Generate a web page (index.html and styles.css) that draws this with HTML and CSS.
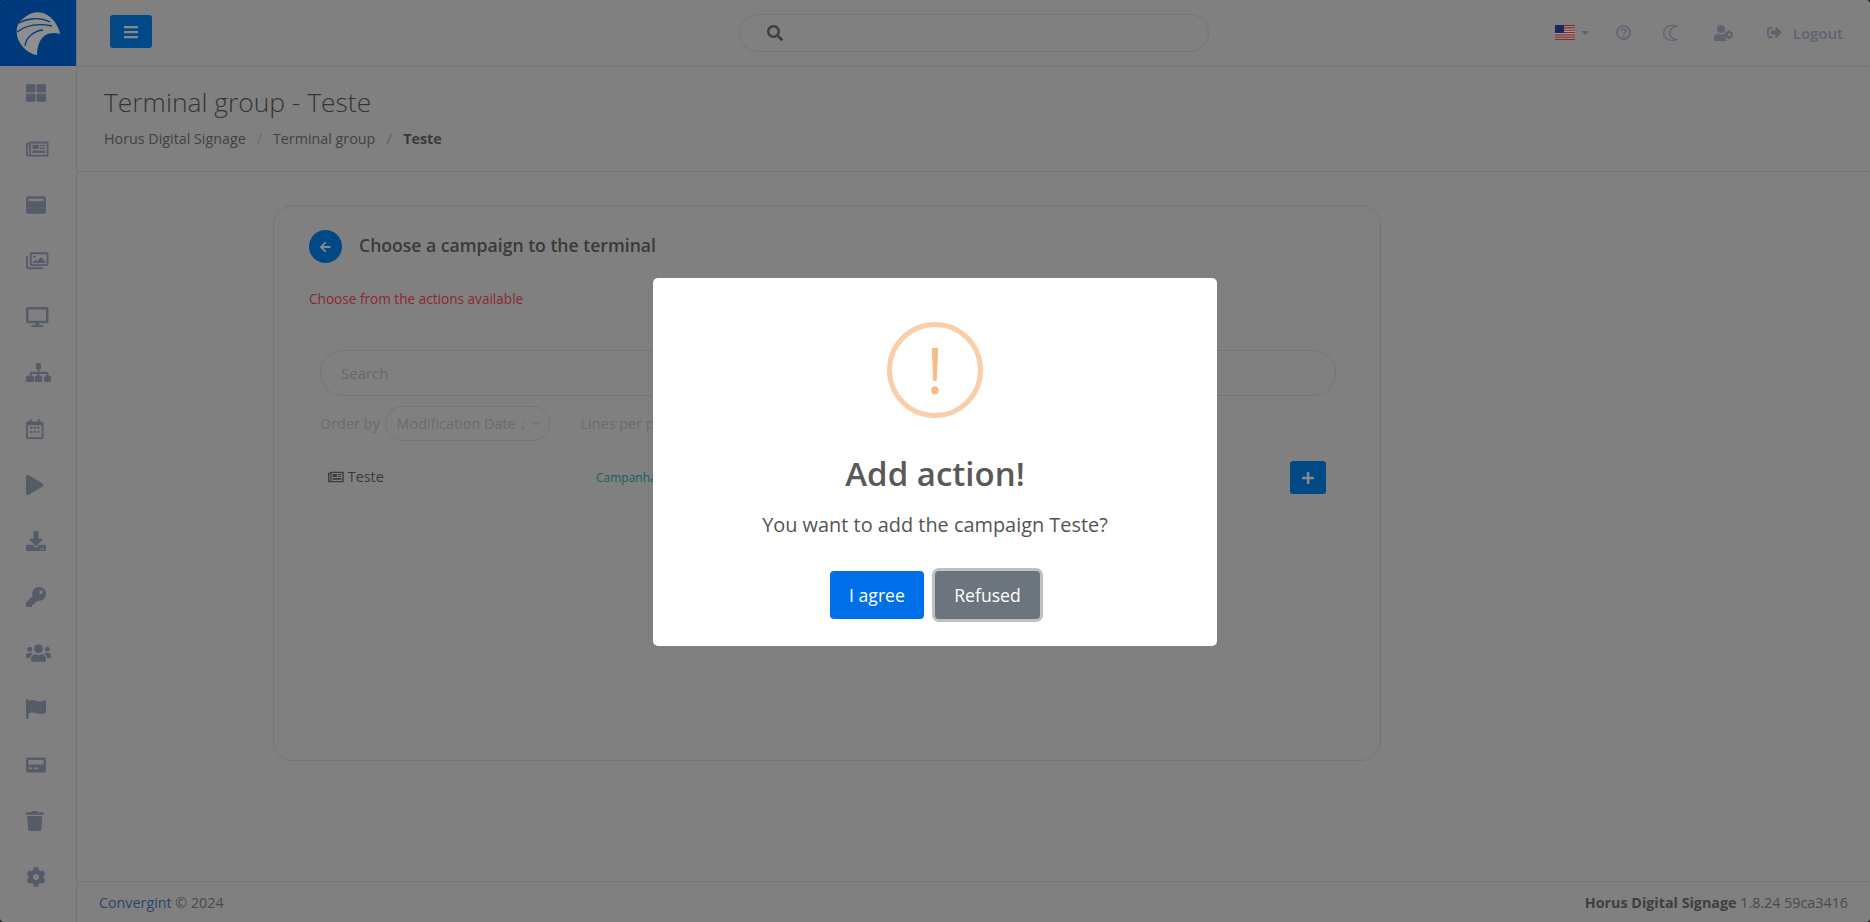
FILE: index.html
```html
<!DOCTYPE html>
<html lang="en">
<head>
<meta charset="utf-8">
<title>Terminal group - Teste</title>
<link rel="stylesheet" href="styles.css">
</head>
<body>
<div class="app">
  <aside class="sidebar">
    <div class="logo">
      <svg class="eagle" viewBox="0 0 44 44">
        <path class="eagle-head" d="M14 3C22-1 32 2 38 10 41 14 44 20 44 23 38 21 31 22 27 26 23 30 21 37 21 44 13 43 6 37 2 28-1 20 1 11 8 7 10 5 12 4 14 3Z"/>
        <path class="eagle-line" d="M3 12C12 7 24 6 34 11M1 21C10 14 22 12 36 15M9 35C10 26 18 20 27 19"/>
      </svg>
    </div>
    <nav class="menu">
      <a class="menu-item"><svg class="ic" viewBox="0 0 512 512"><path d="M296 32h192c13.255 0 24 10.745 24 24v160c0 13.255-10.745 24-24 24H296c-13.255 0-24-10.745-24-24V56c0-13.255 10.745-24 24-24zm-80 0H24C10.745 32 0 42.745 0 56v160c0 13.255 10.745 24 24 24h192c13.255 0 24-10.745 24-24V56c0-13.255-10.745-24-24-24zM0 296v160c0 13.255 10.745 24 24 24h192c13.255 0 24-10.745 24-24V296c0-13.255-10.745-24-24-24H24c-13.255 0-24 10.745-24 24zm296 184h192c13.255 0 24-10.745 24-24V296c0-13.255-10.745-24-24-24H296c-13.255 0-24 10.745-24 24v160c0 13.255 10.745 24 24 24z"/></svg></a>
      <a class="menu-item"><svg class="ic" viewBox="0 0 576 512"><path fill-rule="evenodd" d="M112 64h432c18 0 32 14 32 32v320c0 18-14 32-32 32H48c-27 0-48-21-48-48V120c0-13 11-24 24-24h56V96c0-18 14-32 32-32zm16 48v288c0 0 0 0 0 0h400V112zM48 144v256h32V144zM168 144h160v112H168zm192 0h128v40H360zm0 72h128v40H360zM168 296h320v64H168z"/></svg></a>
      <a class="menu-item"><svg class="ic" viewBox="0 0 512 512"><path fill-rule="evenodd" d="M48 32h416c26.500 0 48 21.500 48 48v352c0 26.500-21.500 48-48 48H48c-26.500 0-48-21.500-48-48V80c0-26.500 21.500-48 48-48zm16 64v64h384V96z"/></svg></a>
      <a class="menu-item"><svg class="ic" viewBox="0 0 576 512"><path fill-rule="evenodd" d="M144 32h384c26.500 0 48 21.500 48 48v256c0 26.500-21.500 48-48 48H144c-26.500 0-48-21.500-48-48V80c0-26.500 21.500-48 48-48zm0 48v256h384V80zM48 128v272c0 8.800 7.200 16 16 16h368v48H64c-35 0-64-29-64-64V128zM216 112a32 32 0 1 1 0 64 32 32 0 0 1 0-64zM176 288l64-64 40 40 104-104 112 112v32H176z"/></svg></a>
      <a class="menu-item"><svg class="ic" viewBox="0 0 576 512"><path d="M528 0H48C21.500 0 0 21.500 0 48v320c0 26.500 21.500 48 48 48h192l-16 48h-72c-13.300 0-24 10.700-24 24s10.700 24 24 24h272c13.300 0 24-10.700 24-24s-10.700-24-24-24h-72l-16-48h192c26.500 0 48-21.500 48-48V48c0-26.500-21.500-48-48-48zm-16 352H64V64h448v288z"/></svg></a>
      <a class="menu-item"><svg class="ic" viewBox="0 0 640 512"><path d="M256 32a32 32 0 0 1 32-32h64a32 32 0 0 1 32 32v96a32 32 0 0 1-32 32h-8v64h184c26 0 48 22 48 48v56h24a40 40 0 0 1 40 40v80a40 40 0 0 1-40 40h-96a40 40 0 0 1-40-40v-80a40 40 0 0 1 40-40h24v-48H344v48h32a40 40 0 0 1 40 40v80a40 40 0 0 1-40 40H264a40 40 0 0 1-40-40v-80a40 40 0 0 1 40-40h32v-48H144v48h24a40 40 0 0 1 40 40v80a40 40 0 0 1-40 40H40a40 40 0 0 1-40-40v-80a40 40 0 0 1 40-40h56v-56c0-26 22-48 48-48h152v-64h-8a32 32 0 0 1-32-32z"/></svg></a>
      <a class="menu-item"><svg class="ic" viewBox="0 0 448 512"><path fill-rule="evenodd" d="M120 0c13 0 24 11 24 24v40h160V24c0-13 11-24 24-24s24 11 24 24v40h48c26.500 0 48 21.500 48 48v352c0 26.500-21.500 48-48 48H48c-26.500 0-48-21.500-48-48V112c0-26.500 21.500-48 48-48h48V24C96 11 107 0 120 0zM48 160v298c0 3 3 6 6 6h340c3 0 6-3 6-6V160zM100 200h60v50h-60zm94 0h60v50h-60zm94 0h60v50h-60zM100 300h60v50h-60zm94 0h60v50h-60zm94 0h60v50h-60z"/></svg></a>
      <a class="menu-item"><svg class="ic" viewBox="0 0 448 512"><path d="M424.400 214.700L72.400 6.600C43.800-10.300 0 6.100 0 47.900V464c0 37.500 40.700 60.100 72.400 41.300l352-208c31.400-18.500 31.500-64.100 0-82.600z"/></svg></a>
      <a class="menu-item"><svg class="ic" viewBox="0 0 512 512"><path d="M216 0h80c13.300 0 24 10.700 24 24v168h87.700c17.800 0 26.700 21.500 14.100 34.100L269.700 378.300c-7.500 7.500-19.800 7.500-27.300 0L90.100 226.100c-12.600-12.600-3.700-34.100 14.100-34.100H192V24c0-13.300 10.700-24 24-24zm296 376v112c0 13.300-10.700 24-24 24H24c-13.300 0-24-10.700-24-24V376c0-13.300 10.700-24 24-24h146.700l49 49c20.100 20.100 52.500 20.100 72.600 0l49-49H488c13.300 0 24 10.700 24 24zm-124 88c0-11-9-20-20-20s-20 9-20 20 9 20 20 20 20-9 20-20zm64 0c0-11-9-20-20-20s-20 9-20 20 9 20 20 20 20-9 20-20z"/></svg></a>
      <a class="menu-item"><svg class="ic" viewBox="0 0 512 512"><path d="M512 176.001C512 273.203 433.202 352 336 352c-11.220 0-22.190-1.062-32.827-3.069l-24.012 27.014A23.999 23.999 0 0 1 261.223 384H224v40c0 13.255-10.745 24-24 24h-40v40c0 13.255-10.745 24-24 24H24c-13.255 0-24-10.745-24-24v-78.059c0-6.365 2.529-12.470 7.029-16.971l161.802-161.802C163.108 213.814 160 195.271 160 176 160 78.798 238.797.001 335.999 0 433.488-.001 512 78.511 512 176.001zM336 128c0 26.510 21.490 48 48 48s48-21.490 48-48-21.490-48-48-48-48 21.490-48 48z"/></svg></a>
      <a class="menu-item"><svg class="ic" viewBox="0 0 640 512"><path d="M96 224a64 64 0 1 0 0-128 64 64 0 0 0 0 128zm448 0a64 64 0 1 0 0-128 64 64 0 0 0 0 128zm32 32h-64c-17.600 0-33.500 7.100-45.100 18.600 40.300 22.100 68.900 62 75.100 109.400h66c17.700 0 32-14.300 32-32v-32c0-35.300-28.700-64-64-64zm-256 0a112 112 0 1 0 0-224 112 112 0 0 0 0 224zm76.800 32h-8.300c-20.800 10-43.900 16-68.500 16s-47.600-6-68.500-16h-8.300C179.600 288 128 339.600 128 403.200V432c0 26.500 21.500 48 48 48h288c26.500 0 48-21.500 48-48v-28.800c0-63.600-51.600-115.200-115.200-115.200zm-223.700-13.400C161.500 263.100 145.600 256 128 256H64c-35.300 0-64 28.700-64 64v32c0 17.700 14.300 32 32 32h65.900c6.300-47.400 34.900-87.300 75.200-109.400z"/></svg></a>
      <a class="menu-item"><svg class="ic" viewBox="0 0 512 512"><path d="M32 0c17.700 0 32 14.300 32 32v16c60-34 120-30 176-10 70 26 130 40 208 0 28-14 64 4 64 36v250c0 12-7 24-18 30-90 46-170 34-250 6-60-22-120-24-180 12v108c0 17.700-14.300 32-32 32S0 497.700 0 480V32C0 14.300 14.300 0 32 0z"/></svg></a>
      <a class="menu-item"><svg class="ic" viewBox="0 0 512 512"><path fill-rule="evenodd" d="M48 64h416c26.500 0 48 21.500 48 48v288c0 26.500-21.500 48-48 48H48c-26.500 0-48-21.500-48-48V112c0-26.500 21.500-48 48-48zm16 64v112h384V128zM64 320v40h96v-40zm144 0v40h96v-40z"/></svg></a>
      <a class="menu-item"><svg class="ic" viewBox="0 0 448 512"><path d="M432 32H312l-9.400-18.700A24 24 0 0 0 281.100 0H166.800a23.720 23.720 0 0 0-21.400 13.300L136 32H16A16 16 0 0 0 0 48v32a16 16 0 0 0 16 16h416a16 16 0 0 0 16-16V48a16 16 0 0 0-16-16zM53.200 467a48 48 0 0 0 47.900 45h245.800a48 48 0 0 0 47.900-45L416 128H32z"/></svg></a>
      <a class="menu-item"><svg class="ic" viewBox="0 0 512 512"><path d="M487.400 315.700l-42.600-24.600c4.300-23.200 4.300-47 0-70.200l42.600-24.600c4.900-2.800 7.100-8.600 5.500-14-11.100-35.600-30-67.800-54.700-94.600-3.800-4.100-10-5.100-14.800-2.300L380.800 110c-17.900-15.400-38.500-27.300-60.800-35.100V25.800c0-5.600-3.900-10.500-9.400-11.700-36.700-8.200-74.300-7.800-109.200 0-5.500 1.200-9.400 6.100-9.400 11.700V75c-22.200 7.900-42.800 19.800-60.800 35.100L88.700 85.500c-4.900-2.800-11-1.900-14.800 2.300-24.700 26.700-43.600 58.900-54.700 94.600-1.700 5.400.6 11.200 5.500 14L67.300 221c-4.300 23.200-4.300 47 0 70.200l-42.600 24.600c-4.900 2.800-7.100 8.600-5.500 14 11.100 35.600 30 67.800 54.700 94.600 3.800 4.100 10 5.100 14.800 2.300l42.600-24.600c17.900 15.400 38.500 27.300 60.800 35.100v49.200c0 5.600 3.900 10.500 9.400 11.700 36.700 8.200 74.300 7.800 109.200 0 5.500-1.200 9.400-6.100 9.400-11.700v-49.200c22.200-7.900 42.800-19.800 60.800-35.100l42.600 24.600c4.900 2.800 11 1.900 14.800-2.300 24.700-26.700 43.600-58.900 54.700-94.600 1.500-5.500-.7-11.300-5.600-14.100zM256 336c-44.100 0-80-35.900-80-80s35.900-80 80-80 80 35.900 80 80-35.900 80-80 80z"/></svg></a>
    </nav>
  </aside>

  <div class="main">
    <header class="topbar">
      <button class="btn-menu"><svg class="ic-sm" viewBox="0 0 448 512"><path d="M16 132h416c8.837 0 16-7.163 16-16V76c0-8.837-7.163-16-16-16H16C7.163 60 0 67.163 0 76v40c0 8.837 7.163 16 16 16zm0 160h416c8.837 0 16-7.163 16-16v-40c0-8.837-7.163-16-16-16H16c-8.837 0-16 7.163-16 16v40c0 8.837 7.163 16 16 16zm0 160h416c8.837 0 16-7.163 16-16v-40c0-8.837-7.163-16-16-16H16c-8.837 0-16 7.163-16 16v40c0 8.837 7.163 16 16 16z"/></svg></button>
      <div class="top-search"><svg class="ic-search" viewBox="0 0 512 512"><path d="M505 442.700L405.300 343c-4.500-4.500-10.600-7-17-7H372c27.600-35.300 44-79.700 44-128C416 93.100 322.900 0 208 0S0 93.100 0 208s93.100 208 208 208c48.300 0 92.700-16.400 128-44v16.300c0 6.400 2.500 12.500 7 17l99.700 99.700c9.400 9.400 24.600 9.400 33.900 0l28.300-28.300c9.400-9.400 9.400-24.600.1-34zM208 336c-70.700 0-128-57.200-128-128 0-70.700 57.200-128 128-128 70.700 0 128 57.200 128 128 0 70.700-57.200 128-128 128z"/></svg></div>
      <div class="top-actions">
        <span class="lang">
          <svg class="flag" viewBox="0 0 20 15"><rect width="20" height="15" fill="#fff"/><path d="M0 .6h20M0 2.900h20M0 5.200h20M0 7.500h20M0 9.800h20M0 12.100h20M0 14.400h20" stroke="#d8484e" stroke-width="1.150"/><rect width="9" height="8" fill="#2a3f8f"/></svg>
          <i class="caret"></i>
        </span>
        <svg class="top-ic q" viewBox="0 0 24 24"><circle cx="12" cy="12" r="10.500" fill="none" stroke-width="2.600"/><path d="M8.500 9.500c0-2 1.600-3.300 3.600-3.300s3.500 1.300 3.500 3.100c0 2.900-3.500 2.700-3.500 5.200" fill="none" stroke-width="2.400"/><circle class="q-dot" cx="12.100" cy="17.700" r="1.600"/></svg>
        <svg class="top-ic moon" viewBox="0 0 20 24"><path d="M13 1.800C6.500 1.800 1.500 6.500 1.500 12s5 10.200 11.500 10.200c2 0 3.900-.5 5.500-1.400-5.200-.5-9-4.200-9-8.800s3.800-8.300 9-8.800C16.900 2.300 15 1.800 13 1.800z" fill="none" stroke-width="1.800"/></svg>
        <svg class="top-ic user" viewBox="0 0 640 512"><path class="solid" d="M224 256a128 128 0 1 0 0-256 128 128 0 0 0 0 256zm89.600 32h-16.700c-22.200 10.200-46.900 16-72.900 16s-50.600-5.800-72.900-16h-16.700C60.200 288 0 348.200 0 422.400V464c0 26.500 21.500 48 48 48h352c10 0 19-3 27-8-30-30-50-60-50-100 0-40 10-70 20-90-25-16-55-26-83.400-26z"/><path class="solid" fill-rule="evenodd" d="M610 340l-25-14c2-14 2-26 0-40l25-14c3-2 5-5 4-9-6-21-18-40-32-56-2-3-6-3-9-1l-25 14c-10-9-22-16-35-21v-28c0-4-2-7-5-7-21-5-44-4-64 0-3 0-5 3-5 7v28c-13 5-25 12-35 21l-25-14c-3-2-7-2-9 1-14 16-26 35-32 56-1 4 1 7 4 9l25 14c-2 14-2 26 0 40l-25 14c-3 2-5 5-4 9 6 21 18 40 32 56 2 3 6 3 9 1l25-14c10 9 22 16 35 21v28c0 4 2 7 5 7 21 5 44 4 64 0 3 0 5-3 5-7v-28c13-5 25-12 35-21l25 14c3 2 7 2 9-1 14-16 26-35 32-56 1-4-1-7-4-9zm-122 12a46 46 0 1 1 0-92 46 46 0 0 1 0 92z"/></svg>
        <a class="logout">
          <svg class="top-ic out" viewBox="0 0 512 512"><path class="solid" d="M497 273L329 441c-15 15-41 4.500-41-17v-96H152c-13.300 0-24-10.700-24-24v-96c0-13.300 10.700-24 24-24h136V88c0-21.400 25.900-32 41-17l168 168c9.300 9.400 9.300 24.600 0 34zM192 436v-40c0-6.600-5.400-12-12-12H96c-17.700 0-32-14.300-32-32V160c0-17.700 14.300-32 32-32h84c6.600 0 12-5.400 12-12V76c0-6.600-5.400-12-12-12H96c-53 0-96 43-96 96v192c0 53 43 96 96 96h84c6.600 0 12-5.400 12-12z"/></svg>
          Logout
        </a>
      </div>
    </header>

    <section class="page-head">
      <h1>Terminal group - Teste</h1>
      <ol class="crumbs">
        <li>Horus Digital Signage</li>
        <li>Terminal group</li>
        <li class="current">Teste</li>
      </ol>
    </section>

    <div class="content">
      <div class="card">
        <div class="card-title">
          <a class="btn-back"><svg class="ic-back" viewBox="0 0 448 512"><path d="M257.500 445.100l-22.200 22.200c-9.400 9.400-24.600 9.400-33.900 0L7 273c-9.400-9.400-9.400-24.600 0-33.900L201.400 44.700c9.400-9.400 24.600-9.400 33.900 0l22.200 22.200c9.500 9.500 9.300 25-.4 34.300L136.600 216H424c13.300 0 24 10.700 24 24v32c0 13.300-10.700 24-24 24H136.600l120.500 114.800c9.800 9.300 10 24.800.4 34.300z"/></svg></a>
          <h2>Choose a campaign to the terminal</h2>
        </div>
        <p class="hint">Choose from the actions available</p>
        <div class="table-box">
          <input class="search" placeholder="Search">
          <div class="filters">
            <label>Order by</label>
            <span class="select">Modification Date ↓<i class="caret"></i></span>
            <label class="lines">Lines per page</label>
          </div>
          <div class="row">
            <span class="row-name"><svg class="ic-row" viewBox="0 0 576 512"><path fill-rule="evenodd" d="M112 64h432c18 0 32 14 32 32v320c0 18-14 32-32 32H48c-27 0-48-21-48-48V120c0-13 11-24 24-24h56V96c0-18 14-32 32-32zm16 48v288h400V112zM48 144v256h32V144zM168 144h160v112H168zm192 0h128v40H360zm0 72h128v40H360zM168 296h320v64H168z"/></svg>Teste</span>
            <span class="row-type">Campanha</span>
            <button class="btn-add"><svg class="ic-plus" viewBox="0 0 448 512"><path d="M416 208H272V64c0-17.670-14.330-32-32-32h-32c-17.670 0-32 14.330-32 32v144H32c-17.670 0-32 14.330-32 32v32c0 17.670 14.330 32 32 32h144v144c0 17.670 14.330 32 32 32h32c17.670 0 32-14.330 32-32V304h144c17.670 0 32-14.330 32-32v-32c0-17.670-14.330-32-32-32z"/></svg></button>
          </div>
        </div>
      </div>
    </div>

    <footer class="footer">
      <span><a class="link">Convergint</a> © 2024</span>
      <span><b>Horus Digital Signage</b> 1.8.24 59ca3416</span>
    </footer>
  </div>
</div>

<div class="overlay">
  <div class="modal">
    <div class="warn"><span>!</span></div>
    <h3>Add action!</h3>
    <p>You want to add the campaign Teste?</p>
    <div class="modal-btns">
      <button class="btn-ok">I agree</button>
      <button class="btn-no">Refused</button>
    </div>
  </div>
</div>
</body>
</html>
```

FILE: styles.css
```css
* { box-sizing: border-box; }
html, body { height: 100%; margin: 0; }
body { font-family: "Open Sans", "Noto Sans", sans-serif; color: #666; background: #222; overflow: hidden; }
a { text-decoration: none; }
button { border: 0; font-family: inherit; padding: 0; }
h1, h2, h3, p, ol { margin: 0; padding: 0; }

.app { display: flex; height: 100%; background: #cfcfcf; border-radius: 4px; overflow: hidden; }

/* sidebar */
.sidebar { width: 77px; flex: none; border-right: 1px solid #bdbdbd; }
.logo { height: 66px; width: 76px; background: #005ec8; display: flex; align-items: center; justify-content: center; }
.eagle { width: 44px; height: 44px; }
.eagle-head { fill: #e6e6e6; }
.eagle-line { fill: none; stroke: #005ec8; stroke-width: 1.3; }
.menu { display: flex; flex-direction: column; margin-top: -1px; }
.menu-item { height: 56px; padding-left: 26px; display: flex; align-items: center; }
.ic { height: 20px; fill: #8993a8; }

/* top */
.main { flex: 1; display: flex; flex-direction: column; min-width: 0; }
.topbar { height: 67px; flex: none; position: relative; display: flex; align-items: center; padding-left: 33px; padding-bottom: 3px; border-bottom: 1px solid #bdbdbd; }
.btn-menu { width: 42px; height: 33px; border-radius: 3px; background: #0274d8; display: flex; align-items: center; justify-content: center; }
.ic-sm { height: 16px; fill: #dedede; }
.top-search { width: 470px; height: 38px; margin-left: 587px; margin-top: 2px; border: 1px solid #bdbdbd; border-radius: 19px; padding-left: 27px; display: flex; align-items: center; }
.ic-search { height: 16px; fill: #666; }
.top-actions { margin-left: auto; margin-top: 2px; display: flex; align-items: center; padding-right: 27px; }
.lang { display: flex; align-items: center; gap: 6px; margin-right: -1px; }
.flag { width: 20px; height: 15px; }
.caret { width: 0; height: 0; border: 4px solid transparent; border-top-color: #97a1b5; border-bottom: 0; }
.top-ic { stroke: #97a1b5; }
.top-ic .solid { fill: #97a1b5; stroke: none; }
.q-dot { fill: #97a1b5; stroke: none; }
.q { width: 15px; height: 15px; margin-left: 28px; }
.moon { width: 16px; height: 18px; margin-left: 31px; }
.user { width: 20px; height: 16px; margin-left: 36px; }
.logout { margin-left: 33px; display: flex; align-items: center; gap: 11px; font-size: 15px; font-weight: 600; color: #97a1b5; }
.out { width: 15px; height: 15px; }

/* page head */
.page-head { height: 105px; flex: none; padding: 17px 0 0 27px; border-bottom: 1px solid #bdbdbd; }
.page-head h1 { font-size: 26.400px; font-weight: 300; line-height: 36px; color: #555; }
.crumbs { list-style: none; display: flex; margin-top: 9px; font-size: 14.300px; line-height: 20px; color: #6a6a6a; }
.crumbs li + li::before { content: "/"; color: #aaa; padding: 0 11px; }
.crumbs .current { font-weight: 700; color: #5e5e5e; }

/* card */
.content { flex: 1; padding: 33px 0 0 196px; }
.card { width: 1108px; height: 556px; border: 1px solid #bdbdbd; border-radius: 20px; padding: 24px 35px; }
.card-title { display: flex; align-items: center; gap: 17px; }
.btn-back { width: 33px; height: 33px; border-radius: 50%; background: #0274d8; display: flex; align-items: center; justify-content: center; }
.ic-back { height: 12px; fill: #dedede; }
.card-title h2 { font-size: 17.600px; font-weight: 600; line-height: 24px; margin-top: -3px; color: #5e5e5e; }
.hint { margin-top: 27px; font-size: 13.600px; font-weight: 500; line-height: 18px; color: #e04058; }
.table-box { margin: 42px 9px 0 11px; }
.search { display: block; width: 100%; height: 46px; border: 1px solid #bdbdbd; border-radius: 23px; background: none; padding: 0 20px; font: 15px "Open Sans", sans-serif; outline: 0; }
.search::placeholder { color: #a8a8a8; opacity: 1; }
.filters { display: flex; align-items: center; gap: 5px; margin-top: 10px; font-size: 14.400px; color: #adadad; }
.select { height: 35px; width: 165px; border: 1px solid #bdbdbd; border-radius: 18px; padding-left: 11px; display: flex; align-items: center; gap: 5px; color: #adadad; white-space: nowrap; }
.select .caret { border-top-color: #b8b8b8; }
.lines { margin-left: 26px; }
.row { display: flex; align-items: center; height: 33px; margin-top: 20px; padding-left: 8px; }
.row-name { width: 268px; display: flex; align-items: center; gap: 4px; font-size: 14.400px; color: #5e5e5e; position: relative; top: -1px; }
.ic-row { height: 14px; fill: #5e5e5e; }
.row-type { font-size: 12px; color: #2a9a96; }
.btn-add { margin-left: auto; margin-right: 10px; width: 36px; height: 33px; border-radius: 3px; background: #0274d8; display: flex; align-items: center; justify-content: center; }
.ic-plus { height: 14px; fill: #dedede; }

/* footer */
.footer { height: 41px; flex: none; border-top: 1px solid #bdbdbd; padding: 0 22px 0 22px; display: flex; align-items: center; justify-content: space-between; font-size: 14.300px; color: #777; }
.footer b { color: #666; }
.link { color: #3f72a8; }

/* alert */
.overlay { position: fixed; inset: 0; padding-top: 2px; background: rgba(0, 0, 0, .38); display: flex; align-items: center; justify-content: center; }
.modal { width: 564px; height: 368px; background: #fff; border-radius: 5px; display: flex; flex-direction: column; align-items: center; padding-top: 44px; color: #545454; }
.warn { width: 96px; height: 96px; border: 5px solid #facea8; border-radius: 50%; display: flex; align-items: center; justify-content: center; color: #f8bb86; font-size: 64px; line-height: 1; }
.modal h3 { margin-top: 34px; font-size: 33px; font-weight: 600; line-height: 44px; color: #595959; }
.modal p { margin-top: 16px; font-size: 19.900px; line-height: 26px; }
.modal-btns { display: flex; gap: 11px; margin-top: 33px; }
.modal-btns button { height: 48px; border-radius: 4px; color: #fff; font-size: 17.600px; }
.btn-ok { width: 94px; background: #0070e8; }
.btn-no { width: 105px; background: #6c757d; box-shadow: 0 0 0 3px rgba(108, 117, 125, .45); }
```
